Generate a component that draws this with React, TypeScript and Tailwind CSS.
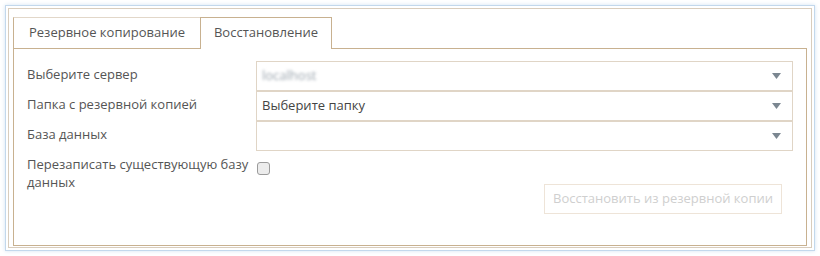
const font = { fontFamily: '"Open Sans", "Liberation Sans", sans-serif' };

const Caret = () => (
  <svg width="9" height="6" viewBox="0 0 9 6" className="shrink-0">
    <path d="M0 0 H9 L4.5 6 Z" fill="#7b8791" />
  </svg>
);

const SelectBox = ({ value, blurred }: { value?: string; blurred?: boolean }) => (
  <div className="flex h-[30px] items-center justify-between border border-[#e0d5c6] bg-white pl-[5px] pr-[11px]">
    <span className={blurred ? "text-[13px] text-[#9aa4ad] blur-[1.5px]" : "text-[13px] text-[#444]"}>
      {value ?? ""}
    </span>
    <Caret />
  </div>
);

export default function App() {
  return (
    <div className="h-[256px] w-[820px] bg-white p-[5px]" style={font}>
      <div className="h-full border border-[#c3d8ec] p-[2px] shadow-[0_0_4px_#d3e3f2]">
        <div className="h-full border border-[#d9cdbd] px-[4px] pb-[1px] pt-[8px]">
          <div className="flex h-full flex-col">
            {/* tabs */}
            <div className="flex h-[31px] items-end">
              <div className="flex h-[31px] items-center border-l border-t border-[#e2d7c9] border-l-[#c8b190] px-[15px] text-[13px] text-[#555]">
                Резервное копирование
              </div>
              <div className="relative -mb-px flex h-[32px] items-center border-x border-t border-[#c8b190] bg-white px-[13px] pb-px text-[13px] text-[#555]">
                Восстановление
              </div>
            </div>
            {/* panel */}
            <div className="flex-1 border border-[#c8b190] pl-[13px] pr-[13px] pt-[12px]">
              <div className="grid grid-cols-[229px_1fr] items-start text-[13px] text-[#555]">
                <div className="pt-[4px]">Выберите сервер</div>
                <SelectBox value="localhost" blurred />
                <div className="pt-[4px]">Папка с резервной копией</div>
                <SelectBox value="Выберите папку" />
                <div className="pt-[4px]">База данных</div>
                <SelectBox />
                <div className="pt-[4px] leading-[18px]">Перезаписать существующую базу данных</div>
                <div className="pt-[11px]">
                  <div className="ml-[1px] h-[13px] w-[13px] rounded-[3px] border border-[#9b9b9b] bg-[#ececec]" />
                </div>
              </div>
              <div className="-mt-[7px] flex justify-end pr-[11px]">
                <button className="h-[30px] border border-[#eee4d8] bg-white px-[8px] text-[13px] text-[#cfcfcf]">
                  Восстановить из резервной копии
                </button>
              </div>
            </div>
          </div>
        </div>
      </div>
    </div>
  );
}
